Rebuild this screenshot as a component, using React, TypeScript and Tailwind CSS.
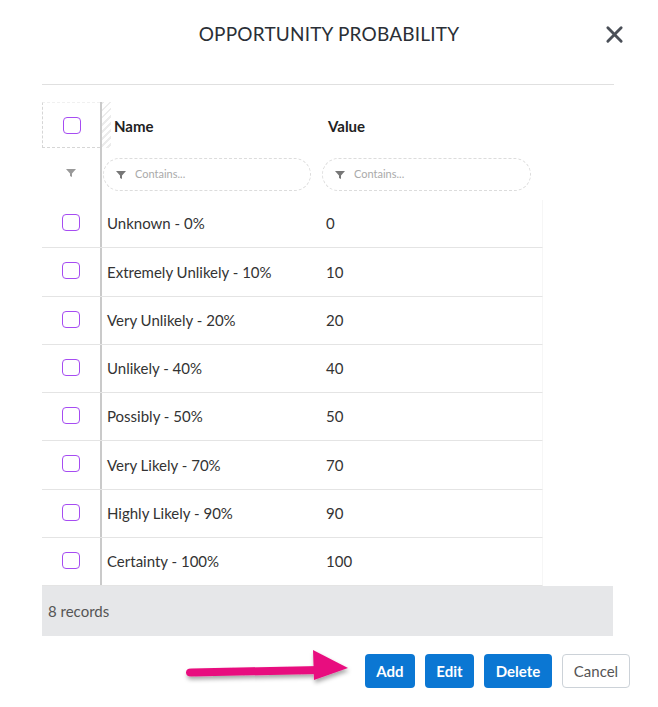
import React from 'react';

const rows = [
  { name: 'Unknown - 0%', value: '0' },
  { name: 'Extremely Unlikely - 10%', value: '10' },
  { name: 'Very Unlikely - 20%', value: '20' },
  { name: 'Unlikely - 40%', value: '40' },
  { name: 'Possibly - 50%', value: '50' },
  { name: 'Very Likely - 70%', value: '70' },
  { name: 'Highly Likely - 90%', value: '90' },
  { name: 'Certainty - 100%', value: '100' },
];

function Checkbox() {
  return <div className="w-[18px] h-[17px] rounded-[4px] border-[1.5px] border-[#a64cf2] bg-white" />;
}

function Funnel({ className = '' }: { className?: string }) {
  return (
    <svg viewBox="0 0 10 10" className={className} fill="currentColor">
      <path d="M0 1h10L6 5.5V9L4 8V5.5z" />
    </svg>
  );
}

function FilterInput({ width }: { width: string }) {
  return (
    <div className={`${width} h-[33px] rounded-full border border-dashed border-[#dcdcdc] flex items-center pl-[12px] gap-[9px] text-[#777]`}>
      <Funnel className="w-[10px] h-[10px]" />
      <span className="text-[11px] text-[#aaa]">Contains...</span>
    </div>
  );
}

export default function App() {
  return (
    <div className="w-[658px] h-[707px] bg-white font-['Lato',sans-serif] text-[#333] relative">
      {/* header */}
      <div className="h-[68px] flex items-center justify-center relative">
        <h1 className="text-[19px] text-[#2a2f36] tracking-[0.2px] mt-[1px]">OPPORTUNITY PROBABILITY</h1>
        <button className="absolute right-[34px] top-[25px] text-[#4a4f57]">
          <svg viewBox="0 0 20 20" className="w-[19px] h-[19px]" stroke="currentColor" strokeWidth="3" strokeLinecap="round">
            <path d="M3 3l14 14M17 3L3 17" />
          </svg>
        </button>
      </div>
      <div className="mx-[42px] mr-[44px] mt-[16px] border-t border-[#e0e0e0]" />

      {/* grid */}
      <div className="ml-[42px] mr-[45px] mt-[17px]">
        {/* header row */}
        <div className="flex h-[46px]">
          <div className="w-[58px] border-l border-b border-t border-dashed border-[#d6d6d6] border-t-[#f0f0f0] flex items-center justify-center">
            <Checkbox />
          </div>
          <div className="w-[2px] bg-[#cacaca]" />
          <div className="w-[9px] bg-[repeating-linear-gradient(135deg,#ececec_0px,#ececec_2px,#ffffff_2px,#ffffff_5px)]" />
          <div className="w-[212px] flex items-center pl-[3px] pt-[2px] font-bold text-[15px] text-[#222]">Name</div>
          <div className="flex items-center pl-[5px] pt-[2px] font-bold text-[15px] text-[#222]">Value</div>
        </div>

        {/* filter row */}
        <div className="flex h-[52px]">
          <div className="w-[58px] flex items-center justify-center text-[#999]">
            <Funnel className="w-[10px] h-[10px] mt-[-2px]" />
          </div>
          <div className="w-[2px] bg-[#cacaca]" />
          <div className="flex items-start pt-[10px] pl-[1px] gap-[11px]">
            <FilterInput width="w-[208px]" />
            <FilterInput width="w-[209px]" />
          </div>
        </div>

        {/* data rows */}
        {rows.map((r) => (
          <div key={r.name} className="flex h-[48.25px] w-[501px] border-b border-[#e4e4e4] border-r border-r-[#f6f6f6]">
            <div className="w-[58px] flex items-center justify-center pb-[2px]">
              <Checkbox />
            </div>
            <div className="w-[2px] bg-[#cacaca]" />
            <div className="w-[224px] flex items-center pl-[5px] text-[15px] text-[#333]">{r.name}</div>
            <div className="flex items-center text-[15px] text-[#333]">{r.value}</div>
          </div>
        ))}

        {/* footer */}
        <div className="h-[50px] bg-[#e6e7e9] flex items-center pl-[6px] text-[15px] text-[#555]">8 records</div>
      </div>

      {/* buttons */}
      <div className="flex h-[34px] items-center justify-end gap-[10px] mr-[28px] mt-[18px]">
        <svg viewBox="0 0 180 50" className="w-[180px] h-[50px] shrink-0 mr-[-4px]">
          <defs>
            <filter id="sh" x="-10%" y="-30%" width="120%" height="180%">
              <feDropShadow dx="1" dy="3" stdDeviation="2" floodColor="#000" floodOpacity="0.35" />
            </filter>
          </defs>
          <g filter="url(#sh)" fill="#e8117f">
            <path d="M12 22.5 L140 20 L140 28 L12 30.5 Q7 30.5 7 26.5 Q7 22.5 12 22.5z" />
            <path d="M134 4 L169 22 L135 34 z" />
          </g>
        </svg>
        <button className="h-[34px] w-[50px] rounded-[4px] bg-[#0b77d3] text-white font-bold text-[15px]">Add</button>
        <button className="h-[34px] w-[49px] rounded-[4px] bg-[#0b77d3] text-white font-bold text-[15px]">Edit</button>
        <button className="h-[34px] w-[68px] rounded-[4px] bg-[#0b77d3] text-white font-bold text-[15px]">Delete</button>
        <button className="h-[34px] w-[68px] rounded-[4px] bg-white border border-[#ccd2d8] text-[#555] text-[15px]">Cancel</button>
      </div>
    </div>
  );
}
